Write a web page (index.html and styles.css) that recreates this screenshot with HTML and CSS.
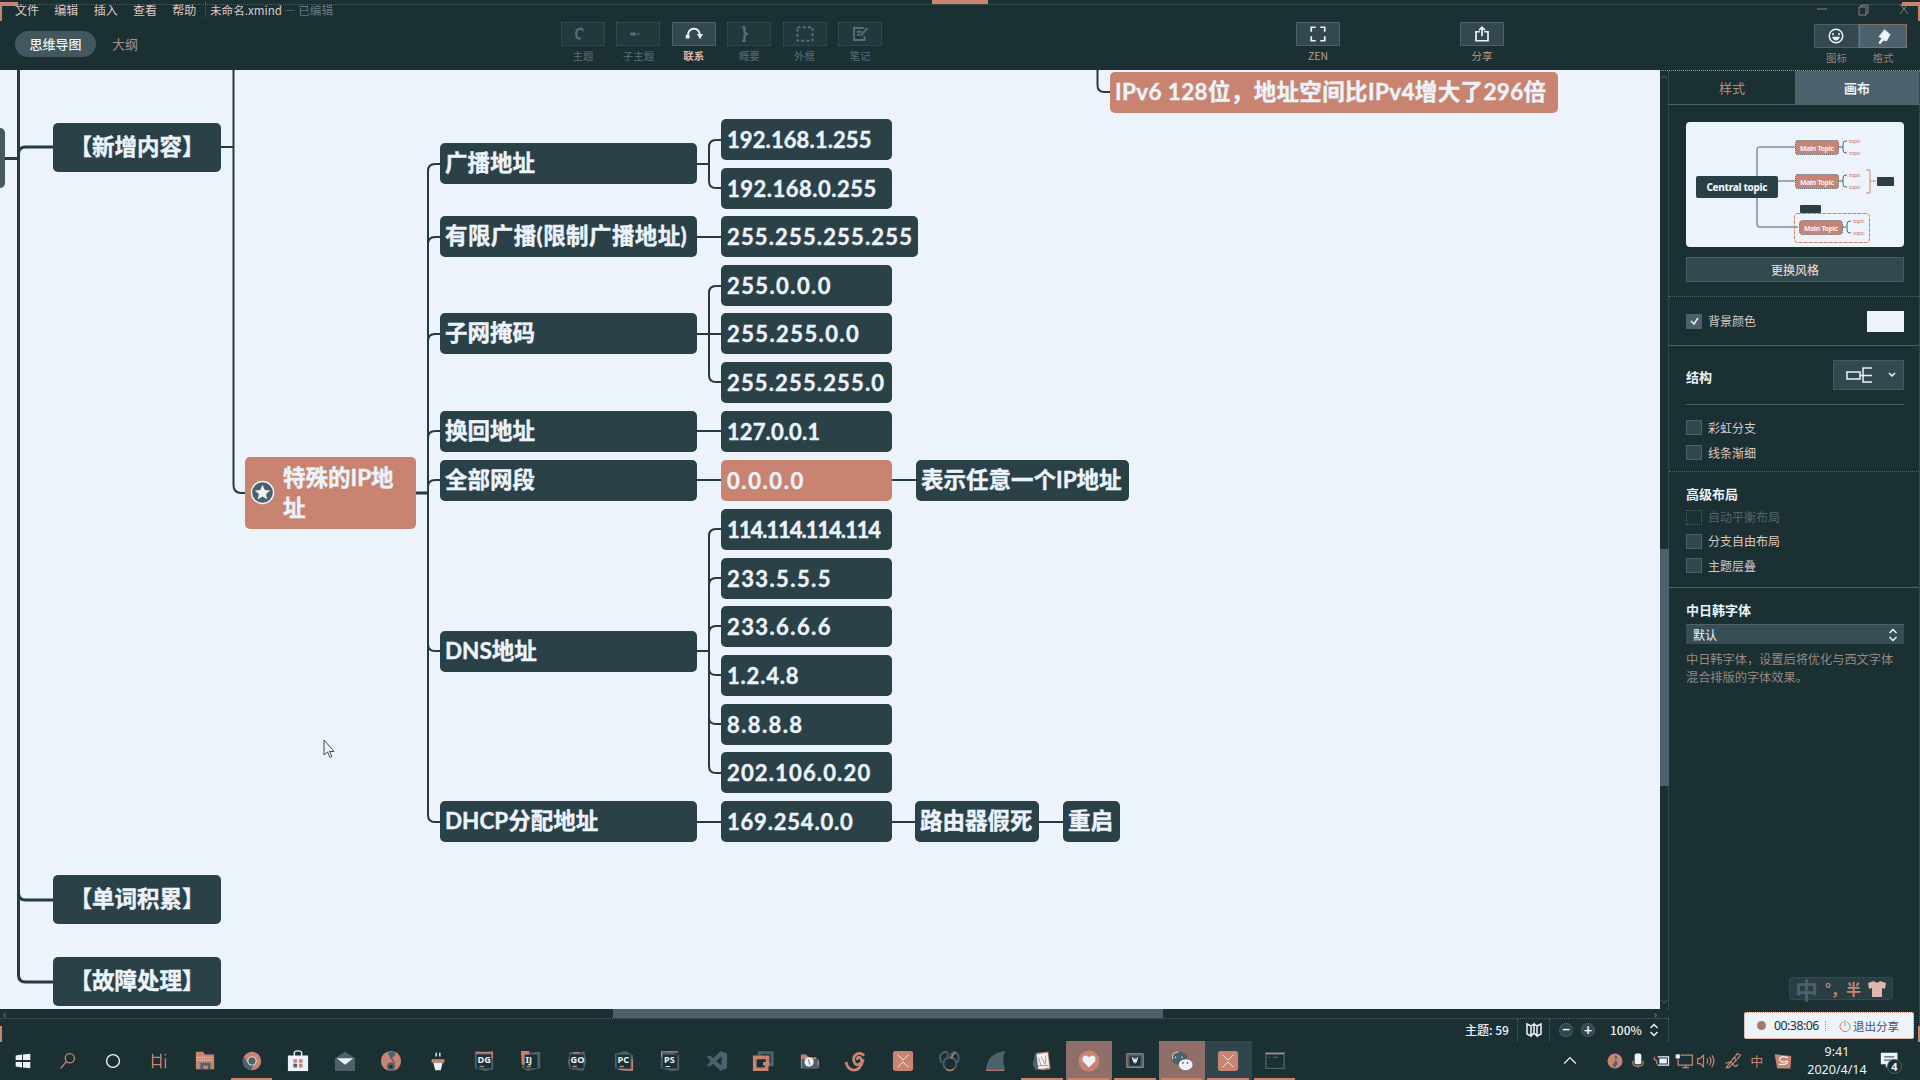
FILE: index.html
```html
<!DOCTYPE html>
<html lang="zh-CN">
<head>
<meta charset="utf-8">
<title>未命名.xmind</title>
<link rel="stylesheet" href="styles.css">
</head>
<body>
<div class="screen">
  <header class="header">
    <div class="menubar">
      <nav class="menus"><span>文件</span><span>编辑</span><span>插入</span><span>查看</span><span>帮助</span></nav>
      <div class="doc">未命名.xmind</div><div class="edited">— 已编辑</div>
      <svg class="winctl" width="96" height="14" viewBox="0 0 96 14"><path d="M2 6h10"/><path d="M44 4h7v8h-7zM46 4V2h7v8h-2"/><path d="M85 1l8 10M93 1l-8 10"/></svg>
    </div>
    <div class="toolbar">
      <div class="views"><span class="pill">思维导图</span><span class="outline">大纲</span></div>
      <div class="tools">
        <div class="tool off"><i><svg viewBox="0 0 24 24"><path d="M9 18H7q-4 0-4-6t4-7h5" stroke-width="3"/><circle cx="12" cy="7" r="1.500"/></svg></i>主题</div>
        <div class="tool off"><i><svg viewBox="0 0 24 24"><path d="M3 11h5v2H3zM11 12h3" stroke-width="2"/></svg></i>子主题</div>
        <div class="tool on"><i><svg viewBox="0 0 24 24"><path d="M4 13q1-8 8-8t8 9" stroke-width="2.500"/><path d="M1 13h5v5H1zM16 12h8l-4 7z" fill="currentColor" stroke="none"/></svg></i><b>联系</b></div>
        <div class="tool off"><i><svg viewBox="0 0 24 24"><path d="M3 3h3v7l3 2-3 2v7H3" stroke-width="3"/></svg></i>概要</div>
        <div class="tool off"><i><svg viewBox="0 0 24 24"><path d="M2 3h20v18H2z" stroke-width="2.500" stroke-dasharray="4 3"/></svg></i>外框</div>
        <div class="tool off"><i><svg viewBox="0 0 24 24"><path d="M17 4H4v16h14v-5M8 9h6M8 13h4M13 14l9-10" stroke-width="2.500"/></svg></i>笔记</div>
      </div>
      <div class="tool zen"><i><svg viewBox="0 0 24 24"><path d="M9 3H3v6M15 3h6v6M3 15v6h6M21 15v6h-6" stroke-width="2.300"/></svg></i>ZEN</div>
      <div class="tool share"><i><svg viewBox="0 0 24 24"><path d="M9 9H4v12h16V9h-5M12 15V3M8 7l4-4 4 4" stroke-width="2.300"/></svg></i>分享</div>
      <div class="tool face"><i><svg viewBox="0 0 24 24"><circle cx="12" cy="12" r="9" stroke-width="2"/><path d="M8 8v3M16 8v3" stroke-width="2"/><path d="M7 13h10q-1 5-5 5t-5-5z" fill="currentColor" stroke="none"/></svg></i>图标</div>
      <div class="tool brush"><i><svg viewBox="0 0 24 24"><path d="M14 3l8 7-5 9-4-1-5 5-2-2 4-6-4-2z" fill="currentColor" stroke="none"/></svg></i>格式</div>
    </div>
  </header>

  <main class="work">
    <section class="editor">
      <div class="canvas">
        <svg class="links" width="1660" height="939" viewBox="0 0 1660 939">
          <g stroke-width="3"><path d="M18.500 0V905q0 7 7 7H53M18.500 84q0-7 7-7H53M18.500 823q0 7 7 7H53M5 88.500h13"/></g>
          <path d="M233.500 0V415q0 8 8 8H246M221 77h12"/>
          <path d="M416 423h12" stroke-width="3"/>
          <path d="M440 94h-5q-7 0-7 7V745q0 7 7 7h5M428 174q0-7 7-7h5M428 271q0-7 7-7h5M428 368q0-7 7-7h5M428 417q0-7 7-7h5M428 574q0 7 7 7h5"/>
          <path d="M697 94h12M721 70h-5q-7 0-7 7v34q0 7 7 7h5M697 167h24M697 264h24M721 216h-5q-7 0-7 7v82q0 7 7 7h5M697 361h24M697 410h24M892 410h24M697 581h12M721 459h-5q-7 0-7 7V696q0 7 7 7h5M709 515q0-7 7-7h5M709 563q0-7 7-7h5M709 599q0 6 7 6h5M709 648q0 6 7 6h5M697 752h24M892 752h24M1039 752h24M1097.500 0v15q0 7 7 7h6"/>
        </svg>
        <div class="node root"></div>
        <div class="node main m1">【新增内容】</div>
        <div class="node main m2">【单词积累】</div>
        <div class="node main m3">【故障处理】</div>
        <div class="node special"><svg viewBox="0 0 28 28"><circle cx="14" cy="14" r="11.500"/><path d="M14 6l2.300 5.300 5.700.5-4.300 3.800 1.300 5.600-5-3-5 3 1.300-5.600L6 11.800l5.700-.5z"/></svg><span>特殊的IP地址</span></div>
        <div class="node l2 y0h">广播地址</div>
        <div class="node l2 y2 k4">有限广播(限制广播地址)</div>
        <div class="node l2 y4">子网掩码</div>
        <div class="node l2 y6">换回地址</div>
        <div class="node l2 y7">全部网段</div>
        <div class="node l2 y10h">DNS地址</div>
        <div class="node l2 y14">DHCP分配地址</div>
        <div class="node ip y0 k1">192.168.1.255</div>
        <div class="node ip y1 k2">192.168.0.255</div>
        <div class="node ip wide y2">255.255.255.255</div>
        <div class="node ip y3 k5">255.0.0.0</div>
        <div class="node ip y4 k5">255.255.0.0</div>
        <div class="node ip y5">255.255.255.0</div>
        <div class="node ip y6 k1">127.0.0.1</div>
        <div class="node ip hot y7">0.0.0.0</div>
        <div class="node ip y8 k3">114.114.114.114</div>
        <div class="node ip y9 k5">233.5.5.5</div>
        <div class="node ip y10 k5">233.6.6.6</div>
        <div class="node ip y11 k6">1.2.4.8</div>
        <div class="node ip y12 k5">8.8.8.8</div>
        <div class="node ip y13">202.106.0.20</div>
        <div class="node ip y14 k6">169.254.0.0</div>
        <div class="node n-any y7">表示任意一个IP地址</div>
        <div class="node n-router y14">路由器假死</div>
        <div class="node n-reboot y14">重启</div>
        <div class="node hot n-v6">IPv6 128位，地址空间比IPv4增大了296倍</div>
        <svg class="cursor" width="12" height="20" viewBox="0 0 12 20"><path d="M1 1v15l3.500-3 2.500 5.500 2-1-2.500-5H11z"/></svg>
      </div>
      <div class="vscroll"><svg width="8" height="6"><path d="M1 5l3-3 3 3"/></svg><div class="vthumb"></div><svg width="8" height="6"><path d="M1 1l3 3 3-3"/></svg></div>
      <div class="hscroll"><span>‹</span><div class="hthumb"></div><span>›</span></div>
      <footer class="status">
        <div class="count">主题: 59</div>
        <div class="map"><svg width="18" height="16" viewBox="0 0 18 16"><path d="M2 2l4 2v10l-4-2zM6 14l3-3V2L6 4M9 2l3 2v10l-3-3M12 14l4-2V2l-4 2"/></svg></div>
        <i class="zoombtn">−</i><i class="zoombtn">+</i><div class="pct">100%</div>
        <svg width="10" height="14" viewBox="0 0 10 14"><path d="M1.500 5L5 1.500 8.500 5M1.500 9L5 12.500 8.500 9"/></svg>
      </footer>
    </section>

    <aside class="panel">
      <div class="tabs"><span>样式</span><span class="active">画布</span></div>
      <section class="sec theme">
        <svg class="preview" width="218" height="125" viewBox="0 0 218 125">
          <g fill="none" stroke="#4d616c"><path d="M109 25H73q-2 0-2 2v76q0 2 2 2h39M91 59h18M152 25h5M161 19h-1q-3 0-3 3v6q0 3 3 3h1M152 59h5M161 53h-1q-3 0-3 3v6q0 3 3 3h1M156 105h4M165 99h-1q-3 0-3 3v6q0 3 3 3h1"/></g>
          <g fill="none" stroke="#c98471"><path d="M180 48h4v23h-4M184 59h6"/><rect x="108.500" y="91.500" width="75" height="29" rx="3" stroke-dasharray="4 1"/></g>
          <g fill="#c98471" stroke="#4d616c" stroke-dasharray="1 1"><rect x="109.500" y="18.500" width="43" height="14" rx="2"/><rect x="109.500" y="52.500" width="43" height="14" rx="2"/><rect x="113.500" y="98.500" width="43" height="14" rx="3"/></g>
          <g fill="#2a4047"><rect x="10" y="54" width="82" height="22" rx="2"/><rect x="191" y="55" width="17" height="9" rx="1"/><rect x="114" y="83" width="21" height="8" rx="1"/></g>
          <text x="20.500" y="69" class="central" textLength="61">Central topic</text>
          <g class="mini"><text x="114" y="29" textLength="34">Main Topic</text><text x="114" y="63" textLength="34">Main Topic</text><text x="118" y="109" textLength="34">Main Topic</text></g>
          <g class="leaf"><text x="163" y="21" textLength="12">topic</text><text x="163" y="33" textLength="12">topic</text><text x="163" y="55" textLength="12">topic</text><text x="163" y="67" textLength="12">topic</text><text x="167" y="101" textLength="12">topic</text><text x="167" y="113" textLength="12">topic</text></g>
        </svg>
        <div class="change">更换风格</div>
      </section>
      <section class="sec bg"><i class="box checked"><svg width="9" height="8"><path d="M1 4l3 3 4-6"/></svg></i><span>背景颜色</span><b class="swatch"></b></section>
      <section class="sec struct">
        <div class="structrow"><h3>结构</h3><div class="drop"><svg width="46" height="18" viewBox="0 0 46 18"><path d="M1 6h13v7H1zM14 9.500h12M26 2h-9v14h9"/></svg><svg width="8" height="6"><path d="M1 1l3 3 3-3"/></svg></div></div>
        <div class="check"><i class="box"></i>彩虹分支</div>
        <div class="check"><i class="box"></i>线条渐细</div>
      </section>
      <section class="sec adv"><h3>高级布局</h3>
        <div class="check dis"><i class="box"></i>自动平衡布局</div>
        <div class="check"><i class="box"></i>分支自由布局</div>
        <div class="check"><i class="box"></i>主题层叠</div>
      </section>
      <section class="cjk"><h3>中日韩字体</h3>
        <div class="select">默认<svg width="10" height="14" viewBox="0 0 10 14"><path d="M1.500 5L5 1.500 8.500 5M1.500 9L5 12.500 8.500 9"/></svg></div>
        <p>中日韩字体，设置后将优化与西文字体<br>混合排版的字体效果。</p>
      </section>
    </aside>
  </main>

  <footer class="taskbar">
    <div class="sys">
      <span><svg viewBox="0 0 24 24"><path class="w" d="M4 6l7-1v6H4zM12 5l8-1v7h-8zM4 13h7v6l-7-1zM12 13h8v7l-8-1z"/></svg></span>
      <span><svg viewBox="0 0 24 24"><circle class="cs" cx="14" cy="9" r="5"/><path class="cs" d="M10 13l-6 7"/></svg></span>
      <span><svg viewBox="0 0 24 24"><circle class="ws" cx="12" cy="12" r="7"/></svg></span>
      <span><svg viewBox="0 0 24 24"><path class="cs" d="M5 4v4h9V4M5 20v-4h9v4M5 8v8M14 8v8M19 4v2M19 9v11"/></svg></span>
    </div>
    <div class="apps">
      <span><svg viewBox="0 0 24 24"><path class="c" d="M2 2h8l2 3h10v16H2z"/><path class="s" d="M7 14h11v7h-3v-4h-5v4H7z"/><path class="ws thin" stroke-dasharray="1 1" d="M3 8h18M3 11h18"/></svg></span>
      <span class="run part"><svg viewBox="0 0 24 24"><circle class="c" cx="12" cy="12" r="10"/><path class="s" d="M3 7a10 10 0 0 0 8 15l3-6-7-2z"/><circle class="w" cx="12" cy="12" r="5"/><circle class="s" cx="12" cy="12" r="4"/></svg></span>
      <span><svg viewBox="0 0 24 24"><path class="ws" d="M8 7V3q0-2 4-2t4 2v4"/><path class="w" d="M1 6h22v17H1z"/><path class="c" d="M7 10h4v4H7zM13 10h4v4h-4zM13 15h4v4h-4z"/><path class="s" d="M7 15h4v4H7z"/></svg></span>
      <span><svg viewBox="0 0 24 24"><path class="s" d="M1 9l11-7 11 7v14H1z"/><path class="w" d="M3 9h18l-9 7z"/></svg></span>
      <span><svg viewBox="0 0 24 24"><circle class="c" cx="12" cy="12" r="11"/><path class="s" d="M8 3l7-2 2 4-5 5zM12 10l1 5"/><circle class="s" cx="12" cy="18" r="4.500"/><circle class="d" cx="12" cy="18" r="2"/><path class="ds" d="M12 8l4 7"/></svg></span>
      <span><svg viewBox="0 0 24 24"><path class="ws" d="M10 3v4M14 3v4"/><path class="c" d="M5 10h14v4H5z"/><path class="w" d="M7 14h10l-2 8H9z"/></svg></span>
      <span><svg viewBox="0 0 24 24"><path class="s" d="M2 1l10 1 10-1v20l-9 2-11-3z"/><path class="d" d="M4 5h16v15H4z"/><path class="cs" d="M3 3h18v6"/><text x="5" y="14">DG</text><path class="cs" d="M7 18h5"/></svg></span>
      <span><svg viewBox="0 0 24 24"><path class="s" d="M8 3l14-1v18l-14 3-6-4z"/><path class="c" d="M1 1h9v15H2z"/><path class="d" d="M5 5h14v15H5z"/><text x="6" y="14">IJ</text><path class="cs" d="M7 18h5"/></svg></span>
      <span><svg viewBox="0 0 24 24"><path class="s" d="M4 2l8 2 8-3 2 12-3 10-15-2-2-8z"/><path class="d" d="M4 5h15v15H5z"/><text x="5" y="14">GO</text><path class="cs" d="M7 18h5M8 3h7"/></svg></span>
      <span><svg viewBox="0 0 24 24"><path class="s" d="M2 4l12-3 8 5v16l-9 1-11-3z"/><path class="cs" d="M6 21l15 1V10"/><path class="d" d="M4 5h15v15H4z"/><text x="5" y="14">PC</text><path class="cs" d="M7 18h5"/></svg></span>
      <span><svg viewBox="0 0 24 24"><path class="s" d="M2 4l12-2 8 4v16l-9 1-11-3z"/><path class="cs" d="M3 8V2h18"/><path class="d" d="M4 5h16v15H4z"/><text x="5.500" y="14">PS</text><path class="ws thin" d="M7 18h5"/></svg></span>
      <span><svg viewBox="0 0 24 24"><path class="s" fill-rule="evenodd" d="M16 1l7 3v16l-7 3-8-8-4 3-3-1 4-5-4-5 3-1 4 3zM17 7l-6 5 6 5z"/></svg></span>
      <span><svg viewBox="0 0 24 24"><path fill="none" stroke="#4d616c" stroke-width="3.500" d="M8 6V3h14v13h-4"/><path fill="none" stroke="#c98471" stroke-width="4" d="M12 15h5V8H3v13h13v-4"/></svg></span>
      <span><svg viewBox="0 0 24 24"><path class="c" d="M2 5h6l2 3h9v12H2z"/><path class="s" d="M3 10h19v10H3z"/><circle class="w" cx="11" cy="13" r="5"/><path class="cs" d="M10 10l2 6M21 12v5"/></svg></span>
      <span><svg viewBox="0 0 24 24"><path fill="none" stroke="#c98471" stroke-width="3" d="M21 6q-5-4-9-1t-2 8 6 2 1-6-4 2M1 13q2 9 9 9t10-12"/></svg></span>
      <span><svg viewBox="0 0 24 24"><rect class="c" x="1" y="1" width="22" height="22" rx="3"/><path class="ws thin" d="M6 5l6 6 6-6M6 19l6-6 6 6"/></svg></span>
      <span><svg viewBox="0 0 24 24"><path fill="none" stroke="#4d616c" stroke-width="2" d="M4 14Q0 6 5 3t6 2l-1 5M14 10q-1-8 5-8 6 5 2 12"/><circle fill="none" stroke="#4d616c" stroke-width="2" cx="13" cy="15" r="7"/><path class="cs" d="M15 9q1-6 4-5M9 21q4 3 8 0"/></svg></span>
      <span><svg viewBox="0 0 24 24"><path class="s" d="M1 21Q3 3 22 1q-4 10 0 20z"/><path class="cs" d="M1 22h20"/></svg></span>
      <span class="run"><svg viewBox="0 0 24 24"><path class="s" d="M4 4l13-2 5 18-17 2-3-6z"/><path class="c" d="M6 3l13-1 2 19-10 1z"/><path class="w" d="M6 5l12-2 2 16-12 2z"/><path class="cs thin" d="M8 8l3 9M11 7l4 8M16 6v10M7 17h12"/></svg></span>
      <span class="run warm"><svg viewBox="0 0 24 24"><circle class="c" cx="12" cy="12" r="11.500"/><path class="w" d="M12 19L5 12V8q3-4 7 0 4-4 7 0v4z"/></svg></span>
      <span class="run"><svg viewBox="0 0 24 24"><path fill="#4d616c" stroke="#c98471" d="M3 4h18v15H3z"/><path class="d" d="M6 7h12v10H6z"/><path class="ws" d="M9 8l2 5 1-3 1 3 2-5"/></svg></span>
      <span class="run warm"><svg viewBox="0 0 24 24"><ellipse class="s" cx="9" cy="9" rx="9" ry="7"/><path class="ws thin" d="M5 7v2M12 7v2M2 10q-2-7 6-8"/><ellipse class="w" cx="16" cy="16" rx="7.500" ry="6"/><path class="ds" d="M13 13v2M18 13v2"/></svg></span>
      <span class="run cool"><svg viewBox="0 0 24 24"><rect class="c" x="1" y="1" width="22" height="22" rx="3"/><path class="ws thin" d="M6 5l6 6 6-6M6 19l6-6 6 6"/></svg></span>
      <span class="run"><svg viewBox="0 0 24 24"><path fill="#1a3033" stroke="#4d616c" stroke-width="1.500" d="M2 3h20v17H2z"/><path class="cs" d="M2 4h20"/><path class="ds" d="M5 8h2M10 8h5"/></svg></span>
    </div>
    <div class="tray">
      <svg class="up" viewBox="0 0 24 24"><path class="ws" d="M5 15l7-7 7 7"/></svg>
      <svg viewBox="0 0 24 24"><circle class="c" cx="12" cy="12" r="9"/><path class="s" d="M11 5l4 2-4 7-2 3 3 3 3-5"/></svg>
      <svg viewBox="0 0 24 24"><rect class="w" x="8" y="3" width="8" height="13" rx="2"/><path class="cs" d="M6 12v3q0 3 6 3t6-3v-3M12 18v2"/></svg>
      <svg viewBox="0 0 24 24"><path class="ws" d="M8 7h13v10H8"/><path class="w" d="M10 9h9v6h-9z"/><path class="cs" d="M4 7v3l3 2v4"/></svg>
      <svg viewBox="0 0 24 24"><path class="cs" d="M8 5h14v12H5v-7M10 20h8M14 17v3"/><path class="w" d="M2 4h5v5H2z"/></svg>
      <svg viewBox="0 0 24 24"><path class="cs" d="M2 9h3l4-4v14l-4-4H2zM13 9q2 3 0 6M16 7q4 5 0 10M19 5q5 7 0 14"/></svg>
      <svg class="pen" viewBox="0 0 24 24"><path class="cs" d="M4 20l9-12 3 3-9 9zM14 8l3-5 4 2-4 5M3 15q6-4 9 1t6 0"/></svg>
      <span class="ime">中</span>
      <svg viewBox="0 0 24 24"><path class="c" d="M2 4l20 2-1 15H5z"/><path class="ws" stroke-width="3" d="M18 8Q8 5 8 10t9 2q2 5-10 4"/></svg>
      <div class="clock"><span>9:41</span><span>2020/4/14</span></div>
      <div class="notice"><svg viewBox="0 0 24 24"><path class="w" d="M1 2h20v14H11l-4 4v-4H1z"/><path class="ds" d="M5 7h12M5 11h12"/></svg><b>4</b></div>
    </div>
  </footer>

  <div class="edge top"></div><div class="grip"></div>
  <div class="corner tl"></div><div class="corner tr"></div><div class="corner bl"></div><div class="corner br"></div>
  <div class="imebar"><b class="big">中</b><b>°，</b><b>半</b><svg width="20" height="18" viewBox="0 0 20 18"><path d="M1 3l6-2q3 3 6 0l6 2-1 6-3-1v9H5V8L2 9z"/></svg></div>
  <div class="meeting"><i></i><span>00:38:06</span><em></em><svg width="12" height="14" viewBox="0 0 12 14"><path d="M4 3a5 5 0 1 0 4 0M6 1v6"/></svg><span class="quit">退出分享</span></div>
</div>
</body>
</html>
```
FILE: styles.css
```css
:root { --d: #1a3033; --s: #4d616c; --c: #c98471; --w: #ecf3fa; --mid: #334950; --node: #2a4148; --soft: #dcc8c3; }
* { box-sizing: border-box; }
body { margin: 0; overflow: hidden; background: var(--d); color: var(--soft); font: 12px/16px "Noto Sans CJK SC", sans-serif; }
i, em { font-style: normal; }
h3 { margin: 0; font-size: 13px; line-height: 18px; font-weight: 700; color: var(--w); }
svg { display: block; flex: none; }
.screen { position: relative; display: flex; flex-direction: column; width: 1920px; height: 1080px; overflow: hidden; }

.header { height: 71px; border-bottom: 1px dotted var(--c); }
.menubar { display: flex; align-items: center; height: 19px; padding-left: 15px; }
.menus { display: flex; gap: 15.300px; width: 191px; border-right: 1px dotted var(--s); }
.doc { margin-left: 4px; width: 74px; white-space: nowrap; font-size: 11.600px; }
.edited { color: #6b7982; white-space: nowrap; font-size: 11.600px; }
.winctl { margin-left: auto; margin-right: 9px; fill: none; stroke: #8c8480; }
.toolbar { display: flex; height: 51px; padding-top: 1px; }
.views { display: flex; align-items: flex-start; width: 561px; padding: 11px 0 0 15px; font-size: 13px; line-height: 26px; }
.pill { width: 81px; text-align: center; border-radius: 13px; background: #43575f; color: var(--w); font-weight: 500; }
.outline { margin-left: 16px; color: #a4918d; }
.tools { display: flex; gap: 11.400px; margin-top: 2px; }
.tool { width: 44px; text-align: center; font-size: 10.500px; line-height: 14px; color: #bd9a91; flex: none; }
.tool i { display: flex; align-items: center; justify-content: center; height: 24px; margin-bottom: 3px; background: #33494f; border: 1px solid var(--s); color: var(--w); }
.tool svg { width: 20px; height: 18px; fill: none; stroke: currentColor; }
.off, .off i { color: #5a6d77; }
.tool.off i { background: #22383c; border: 1px dotted #3d525a; }
.on b { color: #e0b5a7; }
.zen, .share { margin-top: 2px; }
.zen { margin-left: 414px; }
.share { margin-left: 120px; }
.face { margin: 4px 0 0 310px; width: 45px; }
.brush { margin-top: 4px; width: 48px; }
.face, .brush { color: #96807b; }
.brush i { background: var(--s); border-color: #866d68; }

.work { display: flex; height: 970px; }
.editor { width: 1669px; display: grid; grid-template: 938px 10px 22px / 1660px 9px; }
.canvas { position: relative; top: -1px; height: 939px; background: var(--w); overflow: hidden; }
.links { fill: none; stroke: #243b40; stroke-width: 2; }
.node { position: absolute; height: 41px; padding: 0 5px; border-radius: 5px; background: var(--node); color: var(--w); font: 700 22.500px/40px Lato, "Noto Sans CJK SC", sans-serif; -webkit-text-stroke: .4px var(--w); white-space: nowrap; }
.root { left: -10px; top: 58px; width: 15px; height: 60px; background: #43585f; }
.main { left: 53px; width: 168px; height: 49px; line-height: 48px; padding: 0; text-align: center; }
.m1 { top: 53px; } .m2 { top: 805px; } .m3 { top: 887px; }
.hot { background: var(--c); }
.special { left: 245px; top: 387px; width: 171px; height: 72px; display: flex; align-items: center; gap: 8px; padding: 0 4px; background: var(--c); line-height: 30px; white-space: normal; }
.special span { width: 118px; margin-top: -1px; }
.special svg { width: 27px; height: 27px; margin: -2px -1px 0 0; fill: var(--w); }
.special circle { fill: var(--s); stroke: var(--w); stroke-width: 1.500; }
.l2 { left: 440px; width: 257px; }
.ip { left: 721px; width: 171px; padding: 0 6px; letter-spacing: 1.150px; font-size: 22px; line-height: 41px; }
.wide { width: 197px; }
.k1 { letter-spacing: .1px; } .k2 { letter-spacing: .5px; } .k3 { letter-spacing: -1.050px; }
.k4 { letter-spacing: .4px; } .k5 { letter-spacing: 1.400px; } .k6 { letter-spacing: .8px; }
.ip.hot { letter-spacing: 1.600px; }
.y0 { top: 49px; } .y0h { top: 73px; } .y1 { top: 98px; } .y2 { top: 146px; } .y3 { top: 195px; }
.y4 { top: 243px; } .y5 { top: 292px; } .y6 { top: 341px; } .y7 { top: 390px; } .y8 { top: 439px; }
.y9 { top: 488px; } .y10 { top: 536px; } .y10h { top: 561px; } .y11 { top: 585px; } .y12 { top: 634px; }
.y13 { top: 682px; } .y14 { top: 731px; }
.n-any { left: 916px; width: 213px; }
.n-router { left: 915px; width: 124px; }
.n-reboot { left: 1063px; width: 57px; }
.n-v6 { left: 1110px; top: 2px; width: 448px; letter-spacing: .35px; }
.cursor { position: absolute; left: 323px; top: 669px; fill: var(--w); stroke: #4d4a50; }
.vscroll { position: relative; display: flex; flex-direction: column; align-items: center; border-right: 1px dotted var(--s); padding-top: 3px; }
.vscroll svg, .drop svg, .box svg, .status svg, .select svg { fill: none; stroke: var(--s); }
.vthumb { width: 9px; height: 237px; margin: 469px 0 213px; background: var(--s); }
.hscroll { grid-column: 1 / 3; display: flex; justify-content: space-between; align-items: center; padding: 0 12px 0 3px; border-bottom: 1px dotted var(--s); color: #7c8388; line-height: 8px; }
.hthumb { width: 550px; height: 9px; margin-right: 120px; margin-left: 235px; background: var(--s); }
.status { grid-column: 1 / 3; display: flex; align-items: center; padding-left: 1465px; font-size: 12px; font-weight: 500; color: var(--w); border-right: 1px dotted var(--s); line-height: 22px; }
.status .count { width: 52px; white-space: nowrap; }
.map { width: 33px; height: 22px; padding: 3px 7px; border: dotted var(--s); border-width: 0 1px; }
.status svg { stroke: var(--w); stroke-width: 1.500; }
.zoombtn { width: 14px; height: 14px; margin-left: 8px; border: 1px dotted #65747b; border-radius: 50%; background: #31474e; font: 700 15px/11px Lato; text-align: center; }
.map + .zoombtn { margin-left: 9px; }
.pct { margin-left: 15px; width: 39px; }

.panel { width: 251px; border-right: 1px dotted var(--s); }
.tabs { display: grid; grid-template-columns: 126px 124px; height: 34px; line-height: 34px; text-align: center; font-size: 13px; border-bottom: 1px solid var(--s); color: #b58c82; }
.tabs .active { background: var(--s); color: var(--w); font-weight: 700; }
.sec { border-bottom: 1px solid var(--s); padding: 0 15px 0 17px; }
.theme { height: 192px; padding-top: 17px; border-bottom-style: dotted; }
.preview { background: var(--w); border-radius: 4px; }
.central { font: 800 10px "Noto Sans"; fill: var(--w); }
.mini { font: 700 7px "Noto Sans"; fill: var(--w); }
.leaf { font: 6px "Noto Sans"; fill: var(--c); }
.change { height: 25px; margin-top: 10px; line-height: 24px; text-align: center; background: var(--mid); border: 1px solid #465b64; color: #e5cfc8; font-weight: 500; }
.bg { height: 49px; display: flex; align-items: center; }
.box { display: flex; align-items: center; justify-content: center; width: 16px; height: 15px; margin-right: 6px; background: #31474e; border: 1px solid var(--s); }
.checked { background: var(--s); }
.box svg, .drop svg, .select svg { stroke: var(--w); stroke-width: 1.500; }
.swatch { width: 37px; height: 21px; margin-left: auto; background: var(--w); }
.struct { height: 126px; padding-top: 14px; border-bottom-style: dotted; }
.structrow { display: flex; justify-content: space-between; align-items: center; height: 45px; padding-bottom: 14px; margin-bottom: 10px; border-bottom: 1px solid var(--s); }
.structrow h3 { margin-top: 3px; }
.drop { display: flex; align-items: center; width: 71px; height: 30px; padding-left: 12px; background: var(--mid); border: 1px solid #43585f; }
.drop svg + svg { margin-left: -4px; }
.check { display: flex; align-items: center; height: 25px; }
.adv { height: 116px; padding-top: 13px; }
.adv h3 { margin-bottom: 2px; }
.adv .check { height: 24.300px; }
.dis { color: #52656f; }
.dis .box { background: none; border-style: dotted; }
.cjk { padding: 13px 15px 0 17px; }
.select { display: flex; align-items: center; justify-content: space-between; height: 20px; margin-top: 5px; padding: 0 6px 0 7px; background: #384e56; border-top: 1px solid var(--s); color: var(--w); }
.cjk p { margin: 6px 0 0; font-size: 12.200px; line-height: 18px; color: #998883; white-space: nowrap; }

.taskbar { display: flex; height: 39px; }
.sys { display: flex; width: 182px; }
.sys span { width: 45.300px; padding-top: 9px; }
.sys svg, .apps svg { margin: 0 auto; width: 24px; height: 22px; }
.apps { display: flex; }
.apps span { width: 46.500px; height: 39px; padding-top: 9px; }
.apps text { font: 700 10px "Noto Sans"; fill: var(--w); }
.run { border-bottom: 2px solid var(--c); background-clip: padding-box; border-image: linear-gradient(90deg, transparent 4px, #c98471 4px, #c98471 42px, transparent 42px) 2; }
.warm { background: #906f69; }
.cool { background: #30464c; }
.c { fill: var(--c); } .s { fill: var(--s); } .w { fill: var(--w); } .d { fill: var(--d); }
.cs, .ws, .ds { fill: none; stroke: var(--c); stroke-width: 1.500; }
.ws { stroke: var(--w); } .ds { stroke: var(--s); } .thin { stroke-width: 1; }
.tray { display: flex; align-items: center; margin-left: auto; padding-right: 14px; }
.tray svg { width: 20px; height: 20px; margin-right: 2.800px; }
.tray .up { margin-right: 25px; }
.tray .pen { margin-left: 4px; margin-right: 7px; }
.ime { width: 17px; margin-right: 6px; color: var(--c); font-size: 13px; }
.clock { display: flex; flex-direction: column; width: 82px; text-align: center; font: 12.500px/17.500px "Noto Sans"; color: var(--w); }
.notice { position: relative; width: 28px; padding-left: 2px; }
.notice b { position: absolute; left: 9px; top: 8px; width: 15px; height: 15px; border: 1px solid var(--s); border-radius: 50%; background: var(--d); color: var(--w); font: 700 11px/13px "Noto Sans"; text-align: center; }

.edge { position: absolute; left: 18px; right: 18px; top: 4px; border-top: 1px dotted var(--s); }
.grip { position: absolute; left: 932px; top: 0; width: 56px; height: 4px; background: var(--c); }
.corner { position: absolute; border: 0 solid var(--c); }
.tl { left: 0; top: 2px; width: 18px; height: 19px; border-width: 4px 0 0 2px; }
.tr { right: 0; top: 2px; width: 18px; height: 19px; border-width: 4px 2px 0 0; }
.bl { left: 0; top: 1026px; width: 2px; height: 16px; background: var(--c); }
.br { right: 0; top: 1026px; width: 2px; height: 16px; background: var(--c); }
.imebar { position: absolute; left: 1789px; top: 977px; width: 104px; height: 23px; display: flex; align-items: center; gap: 4px; padding-left: 5px; background: #283e43; border: 1px dotted #42565f; border-radius: 4px; color: var(--c); font-size: 15px; white-space: nowrap; }
.imebar .big { width: 26px; font-size: 23px; line-height: 20px; color: var(--s); }
.imebar b:nth-child(2) { width: 17px; }
.imebar svg { margin-left: 2px; fill: #dfb7ad; }
.meeting { position: absolute; left: 1744px; top: 1012px; width: 170px; height: 27px; display: flex; align-items: center; padding-left: 12px; background: var(--w); border: 1px dotted var(--c); border-radius: 2px; color: var(--d); font: 12.300px "Noto Sans", "Noto Sans CJK SC", sans-serif; white-space: nowrap; }
.meeting i { width: 9px; height: 9px; margin-right: 8px; border-radius: 50%; background: #a7786e; }
.meeting span:first-of-type { width: 51px; letter-spacing: -.5px; }
.meeting em { height: 10px; border-left: 1px dotted var(--c); }
.meeting svg { margin: 0 2px 0 13px; fill: none; stroke: var(--c); }
.quit { color: #4d5058; font-size: 11.500px; }
```
